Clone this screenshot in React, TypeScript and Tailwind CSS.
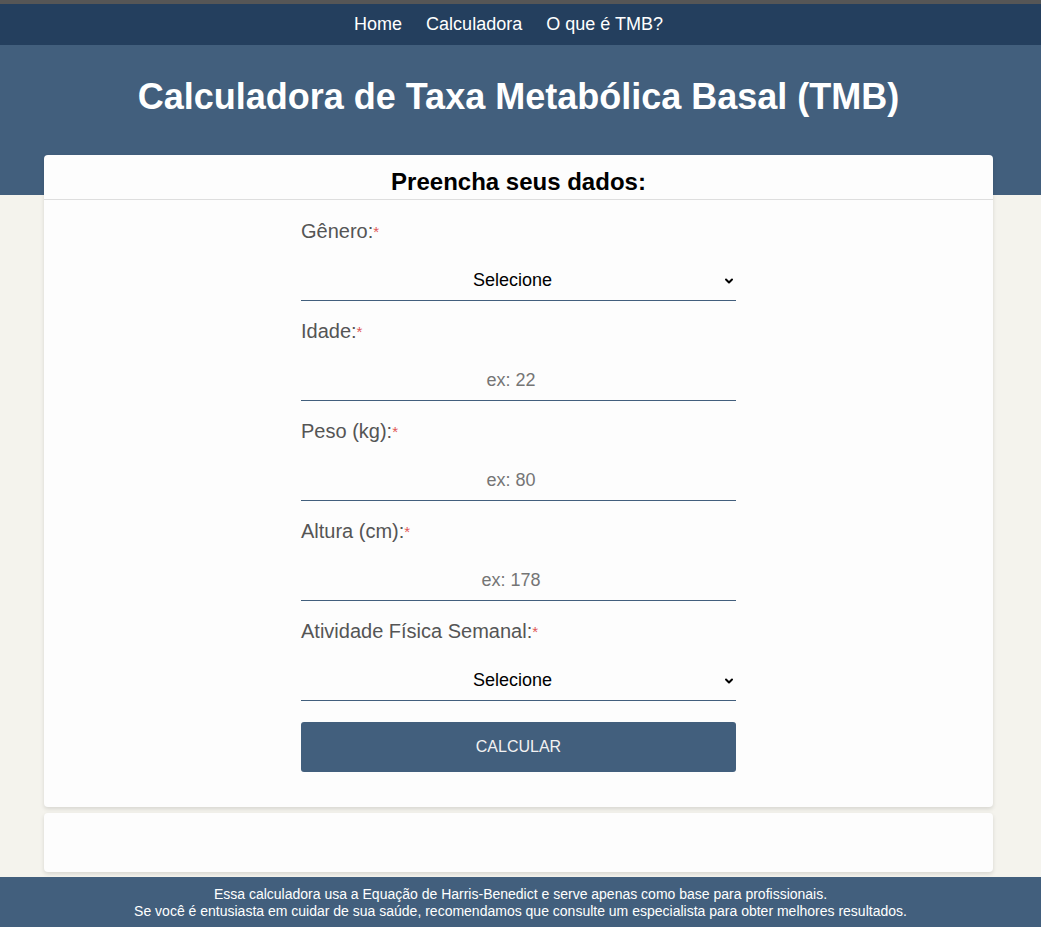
import React from "react";

const Label: React.FC<{ text: string }> = ({ text }) => (
  <label className="block text-[20px] leading-[23px] text-[#555]">
    {text}
    <span className="text-[15px] text-[#e05555] align-top">*</span>
  </label>
);

const Chevron = () => (
  <svg
    className="pointer-events-none absolute right-[2px] top-1/2 -translate-y-1/2 w-[10px] h-[10px]"
    viewBox="0 0 10 10"
    fill="none"
    stroke="black"
    strokeWidth={2}
    strokeLinecap="round"
    strokeLinejoin="round"
  >
    <path d="M2 3.5 L5 6.5 L8 3.5" />
  </svg>
);

const SelectField: React.FC<{ label: string; options: string[] }> = ({ label, options }) => (
  <div className="mb-[19px]">
    <Label text={label} />
    <div className="relative mt-[17px]">
      <select
        defaultValue=""
        className="w-full h-[41px] pr-[12px] appearance-none bg-transparent border-b border-[#425f7d] text-center text-[18px] text-black outline-none [text-align-last:center]"
      >
        <option value="">Selecione</option>
        {options.map((o) => (
          <option key={o}>{o}</option>
        ))}
      </select>
      <Chevron />
    </div>
  </div>
);

const InputField: React.FC<{ label: string; placeholder: string }> = ({ label, placeholder }) => (
  <div className="mb-[19px]">
    <Label text={label} />
    <input
      type="number"
      placeholder={placeholder}
      className="mt-[17px] w-full h-[41px] bg-transparent border-b border-[#425f7d] text-center text-[18px] text-black placeholder:text-[#757575] outline-none"
    />
  </div>
);

export default function App() {
  return (
    <div className="min-h-screen bg-[#f4f3ed] font-['Liberation_Sans',Arial,sans-serif]">
      <div className="h-[4px] bg-[#565656]" />
      <nav className="bg-[#243f5e] h-[41px] flex items-center justify-center gap-[24px] pr-[24px] text-[18px] text-white">
        <a href="#">Home</a>
        <a href="#">Calculadora</a>
        <a href="#">O que é TMB?</a>
      </nav>

      <header className="bg-[#425f7d] pt-[30px] pb-[77px] pr-[4px]">
        <h1 className="text-center text-white font-bold text-[36px] leading-[43px]">
          Calculadora de Taxa Metabólica Basal (TMB)
        </h1>
      </header>

      <main className="-mt-[40px] ml-[44px] mr-[48px]">
        <section className="bg-[#fdfdfd] rounded-[4px] shadow-[0_2px_4px_rgba(0,0,0,0.12)]">
          <h2 className="text-center font-bold text-[24px] leading-[28px] text-black pt-[13px] pb-[3px] border-b border-[#dedede]">
            Preencha seus dados:
          </h2>
          <form className="w-[435px] mx-auto pt-[20px] pb-[35px]" onSubmit={(e) => e.preventDefault()}>
            <SelectField label="Gênero:" options={["Masculino", "Feminino"]} />
            <InputField label="Idade:" placeholder="ex: 22" />
            <InputField label="Peso (kg):" placeholder="ex: 80" />
            <InputField label="Altura (cm):" placeholder="ex: 178" />
            <SelectField
              label="Atividade Física Semanal:"
              options={["Sedentário", "Leve", "Moderada", "Intensa", "Muito intensa"]}
            />
            <button
              type="submit"
              className="mt-[2px] w-full h-[50px] bg-[#425f7d] rounded-[3px] text-[16px] text-[#f2f2f2]"
            >
              CALCULAR
            </button>
          </form>
        </section>

        <section className="mt-[6px] h-[59px] bg-[#fdfdfd] rounded-[4px] shadow-[0_2px_4px_rgba(0,0,0,0.12)]" />
      </main>

      <footer className="mt-[5px] bg-[#425f7d] pt-[9px] pb-[8px] text-center text-white text-[14px] leading-[17px]">
        <p>Essa calculadora usa a Equação de Harris-Benedict e serve apenas como base para profissionais.</p>
        <p>Se você é entusiasta em cuidar de sua saúde, recomendamos que consulte um especialista para obter melhores resultados.</p>
      </footer>
    </div>
  );
}
